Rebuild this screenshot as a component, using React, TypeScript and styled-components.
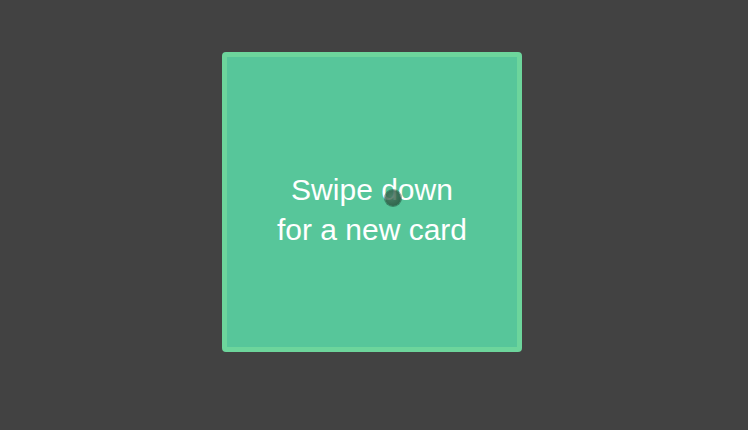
import React from "react";
import styled, { createGlobalStyle } from "styled-components";

const Global = createGlobalStyle`
  html, body {
    margin: 0;
    padding: 0;
    background: #424242;
    font-family: "Liberation Sans", Arial, sans-serif;
  }
`;

export default function App() {
	return (
		<>
			<Global />
			<Stage>
				<Card>
					<Message>
						Swipe down
						<br />
						for a new card
					</Message>
					<Touch />
				</Card>
			</Stage>
		</>
	);
}

const Stage = styled.div`
  width: 748px;
  height: 430px;
  box-sizing: border-box;
  padding: 52px 0 0 222px;
  display: flex;
  align-items: flex-start;
`;

const Card = styled.div`
  position: relative;
  width: 300px;
  height: 300px;
  box-sizing: border-box;
  border: 5px solid #6dd59c;
  border-radius: 4px;
  background: #57c69a;
  display: flex;
  align-items: center;
  justify-content: center;
  padding-top: 16px;
`;

const Message = styled.div`
  color: #ffffff;
  font-size: 30px;
  line-height: 40px;
  text-align: center;
`;

const Touch = styled.div`
  position: absolute;
  left: 158px;
  top: 133px;
  width: 16px;
  height: 16px;
  border-radius: 50%;
  background: radial-gradient(circle at 40% 40%, rgba(70, 110, 90, 0.8), rgba(30, 75, 52, 0.85));
  box-shadow: 0 0 0 1px rgba(20, 50, 35, 0.45);
`;
